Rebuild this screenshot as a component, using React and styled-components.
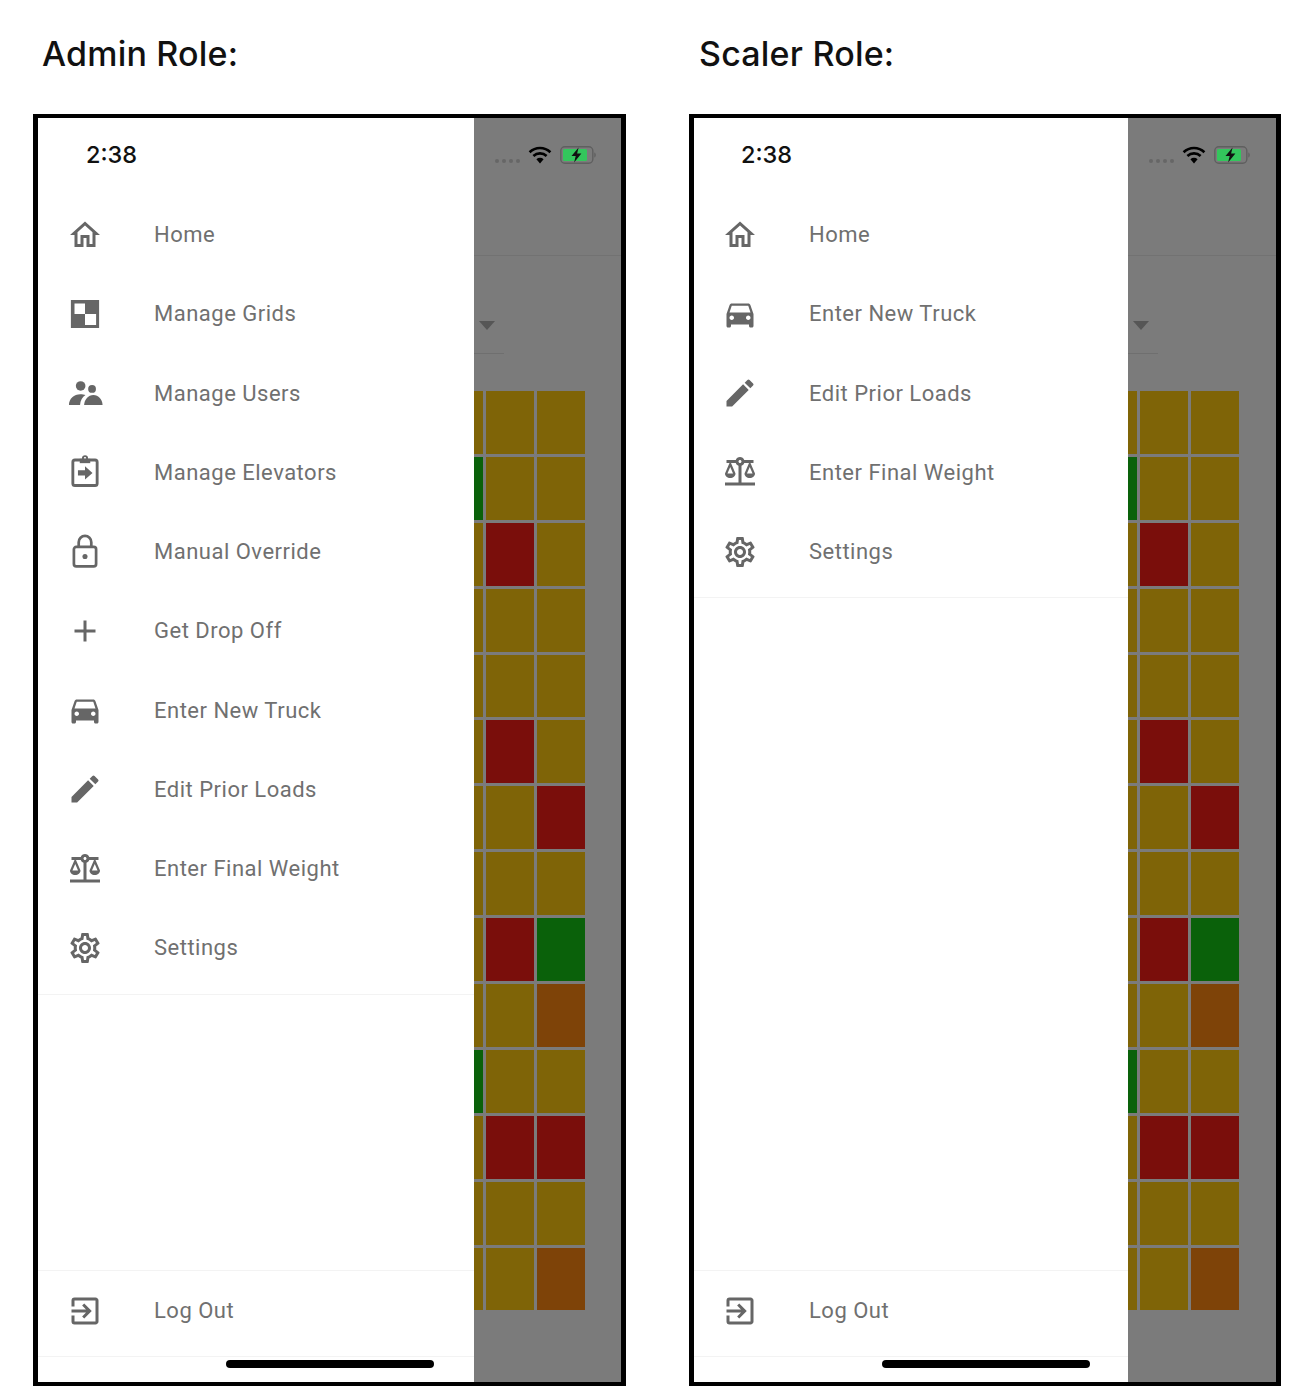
import React from 'react';
import styled, { createGlobalStyle } from 'styled-components';
import {
  MdOutlineHome,
  MdAdd,
  MdDirectionsCar,
  MdEdit,
  MdOutlineBalance,
  MdOutlineSettings,
  MdOutlineExitToApp,
} from 'react-icons/md';

const GlobalStyle = createGlobalStyle`
  html, body {
    margin: 0;
    background: #fff;
  }
`;

const Page = styled.div`
  display: grid;
  grid-template-columns: 593px 592px;
  column-gap: 63px;
  padding-left: 33px;
  height: 1398px;
  box-sizing: border-box;
`;

const Title = styled.h1`
  margin: 0;
  height: 114px;
  padding: 33px 0 0 ${({ $inset }) => 9 + $inset}px;
  box-sizing: border-box;
  font-family: Inter, Lato, sans-serif;
  font-size: 34px;
  line-height: 42px;
  font-weight: 500;
  letter-spacing: 0.2px;
  color: #111;
`;

const Frame = styled.div`
  display: flex;
  width: 100%;
  height: 1272px;
  box-sizing: border-box;
  border: 5px solid #000;
  border-bottom-width: 4px;
  border-top-width: 4px;
`;

const Drawer = styled.div`
  display: flex;
  flex-direction: column;
  flex: none;
  width: ${({ $width }) => $width}px;
  background: #fff;
`;

const Time = styled.div`
  height: 77px;
  padding: 22px 0 0 ${({ $inset }) => 48 - $inset}px;
  box-sizing: border-box;
  font-family: Inter, "Liberation Sans", sans-serif;
  font-size: 23.5px;
  font-weight: 500;
  line-height: 30px;
  color: #111;
`;

const Menu = styled.div`
  padding-bottom: 6px;
  border-bottom: 1px solid #f3f3f3;
`;

const Row = styled.div`
  display: flex;
  align-items: center;
  height: 79.25px;
  padding-left: ${({ $inset }) => 29 - $inset}px;
  font-family: Roboto, sans-serif;
  font-size: 22px;
  letter-spacing: 0.5px;
  color: #707070;

  svg {
    flex: none;
    width: 36px;
    height: 36px;
    margin-right: 51px;
    color: #666;
  }
`;

const Spacer = styled.div`
  flex: 1;
`;

const Footer = styled.div`
  height: 87px;
  box-sizing: border-box;
  border-top: 1px solid #f3f3f3;
  border-bottom: 1px solid #f3f3f3;
`;

const HomeBarRow = styled.div`
  height: 25px;
  padding: 3px 0 0 188px;
  box-sizing: border-box;
`;

const HomeBar = styled.div`
  width: 208px;
  height: 8px;
  border-radius: 4px;
  background: #000;
`;

const Backdrop = styled.div`
  flex: 1;
  min-width: 0;
  overflow: hidden;
  background: #7b7b7b;
`;

const StatusBar = styled.div`
  display: flex;
  align-items: center;
  gap: 8px;
  height: 138px;
  padding: 0 0 63px 21px;
  box-sizing: border-box;
  border-bottom: 1px solid #727272;
`;

const Signal = styled.div`
  display: flex;
  gap: 3px;
  margin-top: 11px;

  span {
    width: 4px;
    height: 4px;
    border-radius: 50%;
    background: #666;
  }
`;

const DropdownRow = styled.div`
  width: 30px;
  height: 98px;
  padding-top: 65px;
  box-sizing: border-box;
  border-bottom: 1px solid #6f6f6f;
`;

const Caret = styled.div`
  width: 0;
  margin-left: 5px;
  border-left: 8px solid transparent;
  border-right: 8px solid transparent;
  border-top: 9px solid #565656;
`;

const Cells = styled.div`
  display: grid;
  grid-template-columns: 9px 48px 48px;
  grid-auto-rows: 62.9px;
  column-gap: 3px;
  row-gap: 3px;
  margin-top: 37px;
`;

const colors = {
  g: '#7f6407',
  r: '#7a0e0b',
  n: '#0a610a',
  o: '#7e4308',
};

const Cell = styled.div`
  background: ${({ $kind }) => colors[$kind]};
`;

const rows = [
  'ggg', 'ngg', 'grg', 'ggg', 'ggg', 'grg', 'ggr',
  'ggg', 'grn', 'ggo', 'ngg', 'grr', 'ggg', 'ggo',
];

const GridIcon = () => (
  <svg viewBox="0 0 24 24" fill="currentColor">
    <path
      fillRule="evenodd"
      d="M2.6 2.6h18.8v18.8H2.6zM5 5h7v7H5zM12 12h7.4v7.4H12z"
    />
  </svg>
);

// two people, the left one a bit bigger and standing behind
const UsersIcon = () => (
  <svg viewBox="0 0 24 24" fill="currentColor">
    <circle cx="9.1" cy="7.3" r="3.2" />
    <circle cx="16.7" cy="9.3" r="2.6" />
    <path d="M1.3 20c0-4.2 3.4-7.2 7.6-7.2 1.3 0 2.5.2 3.4.6-2 1.3-3.4 3.8-3.6 6.6z" />
    <path d="M11.4 20c.2-3.6 2.8-6.6 6.2-6.6s6 3 6.1 6.6z" />
  </svg>
);

const ClipboardIcon = () => (
  <svg viewBox="0 0 24 24" fill="none" stroke="currentColor">
    <rect x="3.9" y="4" width="16.2" height="17" rx="1.4" strokeWidth="1.9" />
    <path d="M8.5 3.2h7v2.9h-7z" fill="currentColor" stroke="none" />
    <circle cx="12" cy="2.8" r="1.4" strokeWidth="1.3" />
    <path d="M7.3 10.8h4.7V8.2l5 4.4-5 4.4v-2.6H7.3z" fill="currentColor" stroke="none" />
  </svg>
);

const LockIcon = () => (
  <svg viewBox="0 0 24 24" fill="none" stroke="currentColor" strokeWidth="1.8">
    <rect x="4.6" y="8.6" width="14.8" height="13" rx="1.6" />
    <path d="M7.8 8.6V5.5a4.2 4.2 0 0 1 8.4 0v3.1" />
    <circle cx="12" cy="15" r="1.7" fill="currentColor" stroke="none" />
  </svg>
);

const WifiIcon = () => (
  <svg width="24" height="18" viewBox="0 0 24 18" fill="none" stroke="#000" strokeWidth="2.6">
    <path d="M1.6 6.2a15 15 0 0 1 20.8 0" />
    <path d="M5.4 10a9.6 9.6 0 0 1 13.2 0" />
    <path d="M12 17.4l-3.6-4.1a5.2 5.2 0 0 1 7.2 0z" fill="#000" stroke="none" />
  </svg>
);

const BatteryIcon = () => (
  <svg width="37" height="18" viewBox="0 0 37 18">
    <rect x="0.8" y="0.8" width="32" height="16.4" rx="4" fill="none" stroke="#5f5f5f" strokeWidth="1.4" />
    <rect x="3" y="3" width="24" height="12" rx="1.5" fill="#33c65c" />
    <path d="M34.5 6.5c1.4.5 1.4 4.5 0 5z" fill="#555" />
    <path d="M18.6 1.5 11.5 10h4.2l-1.6 6.5 7.3-8.9h-4.3z" fill="#111" />
  </svg>
);

const adminItems = [
  ['Home', MdOutlineHome],
  ['Manage Grids', GridIcon],
  ['Manage Users', UsersIcon],
  ['Manage Elevators', ClipboardIcon],
  ['Manual Override', LockIcon],
  ['Get Drop Off', MdAdd],
  ['Enter New Truck', MdDirectionsCar],
  ['Edit Prior Loads', MdEdit],
  ['Enter Final Weight', MdOutlineBalance],
  ['Settings', MdOutlineSettings],
];

const scalerItems = [
  ['Home', MdOutlineHome],
  ['Enter New Truck', MdDirectionsCar],
  ['Edit Prior Loads', MdEdit],
  ['Enter Final Weight', MdOutlineBalance],
  ['Settings', MdOutlineSettings],
];

const Phone = ({ title, items, drawerWidth, inset }) => (
  <div>
    <Title $inset={inset}>{title}</Title>
    <Frame>
      <Drawer $width={drawerWidth}>
        <Time $inset={inset}>2:38</Time>
        <Menu>
          {items.map(([label, Icon]) => (
            <Row key={label} $inset={inset}>
              <Icon />
              {label}
            </Row>
          ))}
        </Menu>
        <Spacer />
        <Footer>
          <Row $inset={inset}>
            <MdOutlineExitToApp />
            Log Out
          </Row>
        </Footer>
        <HomeBarRow>
          <HomeBar />
        </HomeBarRow>
      </Drawer>
      <Backdrop>
        <StatusBar>
          <Signal>
            <span />
            <span />
            <span />
            <span />
          </Signal>
          <WifiIcon />
          <BatteryIcon />
        </StatusBar>
        <DropdownRow>
          <Caret />
        </DropdownRow>
        <Cells>
          {rows.flatMap((row, r) => row.split('').map((kind, c) => (
            <Cell key={`${r}-${c}`} $kind={kind} />
          )))}
        </Cells>
      </Backdrop>
    </Frame>
  </div>
);

const App = () => (
  <>
    <GlobalStyle />
    <Page>
      <Phone title="Admin Role:" items={adminItems} drawerWidth={436} inset={0} />
      <Phone title="Scaler Role:" items={scalerItems} drawerWidth={434} inset={1} />
    </Page>
  </>
);

export default App;
